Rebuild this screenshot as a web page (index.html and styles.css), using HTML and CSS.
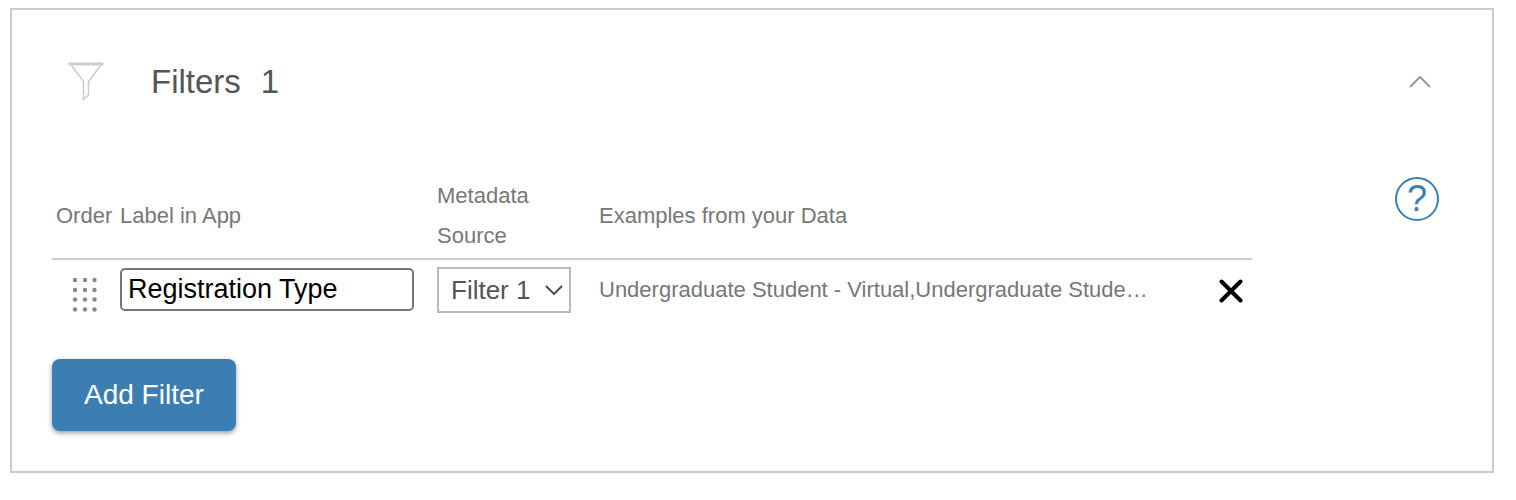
FILE: index.html
```html
<!DOCTYPE html>
<html lang="en">

<head>
    <meta charset="UTF-8">
    <meta name="viewport" content="width=device-width, initial-scale=1.0">
    <title>Filters</title>
    <link rel="stylesheet" href="styles.css">
</head>

<body>
    <section class="panel">
        <header class="panel-header">
            <svg class="funnel" width="36" height="40" viewBox="0 0 36 40" fill="none" stroke="#ccc">
                <path d="M0.5 2h35" stroke-width="3" />
                <path d="M3.5 3.5L15.5 19.5V37.5L20.5 33V19.5L32.5 3.5" stroke-width="1.5" />
            </svg>
            <h2>Filters</h2>
            <span class="count">1</span>
            <button type="button" class="icon-btn collapse" aria-label="Collapse">
                <svg width="24" height="14" viewBox="0 0 24 14" fill="none" stroke="#999" stroke-width="2">
                    <path d="M2 12L12 2l10 10" />
                </svg>
            </button>
        </header>

        <div class="panel-body">
            <div class="table-wrap">
                <table class="filters">
                    <colgroup>
                        <col class="col-order">
                        <col class="col-label">
                        <col class="col-source">
                        <col>
                        <col class="col-remove">
                    </colgroup>
                    <thead>
                        <tr>
                            <th>Order</th>
                            <th><label for="filter-label">Label in App</label></th>
                            <th><label for="filter-source">Metadata Source</label></th>
                            <th>Examples from your Data</th>
                            <th></th>
                        </tr>
                    </thead>
                    <tbody>
                        <tr>
                            <td>
                                <svg class="drag" width="26" height="36" viewBox="0 0 26 36" fill="#888">
                                    <circle cx="3" cy="3" r="2.2" /><circle cx="13" cy="3" r="2.2" /><circle cx="22.5" cy="3" r="2.2" />
                                    <circle cx="3" cy="13" r="2.2" /><circle cx="13" cy="13" r="2.2" /><circle cx="22.5" cy="13" r="2.2" />
                                    <circle cx="3" cy="22.5" r="2.2" /><circle cx="13" cy="22.5" r="2.2" /><circle cx="22.5" cy="22.5" r="2.2" />
                                    <circle cx="3" cy="32.5" r="2.2" /><circle cx="13" cy="32.5" r="2.2" /><circle cx="22.5" cy="32.5" r="2.2" />
                                </svg>
                            </td>
                            <td><input type="text" id="filter-label" value="Registration Type"></td>
                            <td>
                                <div class="select">
                                    <select id="filter-source">
                                        <option>Filter 1</option>
                                        <option>Filter 2</option>
                                        <option>Filter 3</option>
                                    </select>
                                    <svg width="18" height="11" viewBox="0 0 18 11" fill="none" stroke="#444" stroke-width="1.8">
                                        <path d="M1 1l8 8 8-8" />
                                    </svg>
                                </div>
                            </td>
                            <td class="examples">Undergraduate Student - Virtual,Undergraduate Stude…</td>
                            <td>
                                <button type="button" class="icon-btn remove" aria-label="Remove filter">
                                    <svg width="24" height="26" viewBox="0 0 24 26" fill="none" stroke="#000" stroke-width="4" stroke-linecap="round">
                                        <path d="M2.5 4.5l19 19M21.5 4.5l-19 19" />
                                    </svg>
                                </button>
                            </td>
                        </tr>
                    </tbody>
                </table>
            </div>
            <button type="button" class="help" aria-label="Help">?</button>
        </div>

        <button type="button" class="add">Add Filter</button>
    </section>
</body>

</html>
```
FILE: styles.css
```css
* {
    box-sizing: border-box;
}

body {
    margin: 8px 22px 20px 10px;
    color: #777;
    font-family: "Liberation Sans", Arial, sans-serif;
    font-size: 22px;
}

button {
    font-family: inherit;
    cursor: pointer;
}

svg {
    display: block;
}

.panel {
    padding: 40px;
    border: 2px solid #ccc;
    background: #fff;
    box-shadow: 0 2px 6px rgba(0, 0, 0, 0.4);
}

.panel-header {
    display: flex;
    align-items: center;
    height: 64px;
    padding: 0 20px 0 16px;
    color: #555;
    font-size: 33px;
}

.panel-header h2 {
    margin: 0 20px 0 47px;
    font-size: 33px;
    font-weight: normal;
}

.icon-btn {
    padding: 0;
    border: none;
    background: none;
}

.collapse {
    margin-left: auto;
}

.panel-body {
    display: flex;
    align-items: flex-start;
    margin-top: 60px;
    padding-right: 13px;
}

.table-wrap {
    flex: 1;
    min-width: 0;
    margin-right: 143px;
}

.filters {
    width: 100%;
    table-layout: fixed;
    border-collapse: collapse;
}

.col-order {
    width: 64px;
}

.col-label {
    width: 317px;
}

.col-source {
    width: 162px;
}

.col-remove {
    width: 90px;
}

.filters th {
    height: 85px;
    padding: 0 4px;
    border-bottom: 2px solid #ccc;
    font-weight: normal;
    line-height: 40px;
    text-align: left;
}

.filters td {
    height: 60px;
    padding: 0 4px;
}

.drag {
    margin: 10px 0 0 16px;
}

.filters input {
    display: block;
    width: 294px;
    height: 43px;
    padding: 0 6px;
    border: 2px solid #767676;
    border-radius: 5px;
    color: #000;
    font-family: inherit;
    font-size: 27px;
}

.select {
    position: relative;
    width: 134px;
}

.select select {
    display: block;
    width: 100%;
    height: 46px;
    padding: 0 12px;
    appearance: none;
    border: 2px solid #bbb;
    border-radius: 0;
    background: #fff;
    color: #555;
    font-family: inherit;
    font-size: 26px;
}

/* arrow over the select */
.select svg {
    position: absolute;
    top: 18px;
    right: 8px;
    pointer-events: none;
}

.filters .examples {
    overflow: hidden;
    text-overflow: ellipsis;
    white-space: nowrap;
}

.remove {
    display: block;
    margin-left: auto;
    margin-right: 5px;
}

.help {
    flex: none;
    width: 44px;
    height: 44px;
    margin-top: 3px;
    padding: 0;
    border: 2px solid #3c7eb1;
    border-radius: 50%;
    background: #fff;
    color: #3c7eb1;
    font-size: 36px;
    line-height: 40px;
}

.add {
    display: block;
    height: 72px;
    margin-top: 40px;
    padding: 0 32px;
    border: none;
    border-radius: 8px;
    background: #3c7eb1;
    box-shadow: 0 2px 5px rgba(0, 0, 0, 0.4);
    color: #fff;
    font-size: 28px;
}
```
